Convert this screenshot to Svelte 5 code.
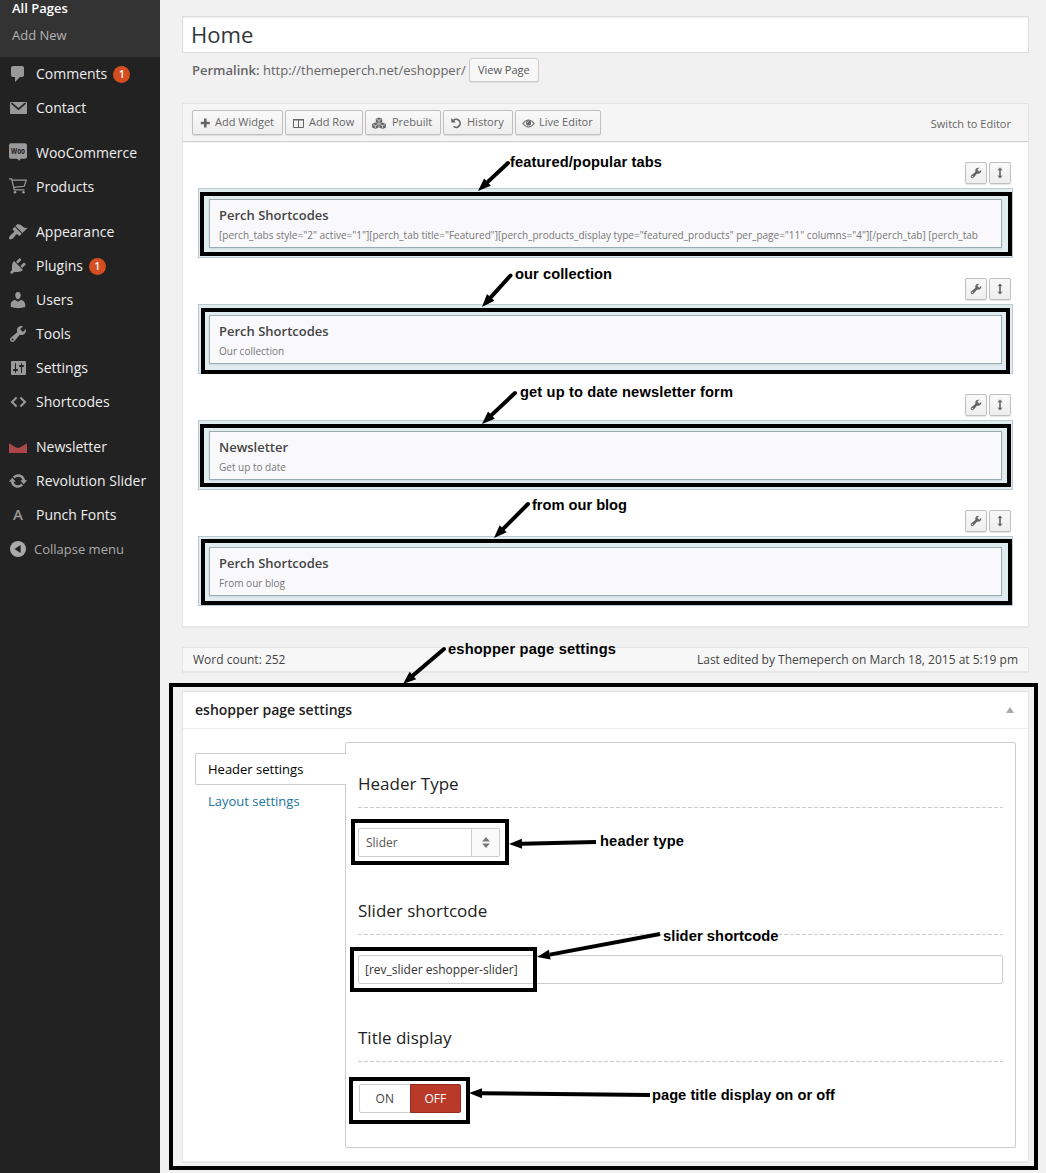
<script>
  const icons = {
    comments: 'M5 2h9c1.1 0 2 .9 2 2v7c0 1.1-.9 2-2 2h-2l-5 5v-5H5c-1.1 0-2-.9-2-2V4c0-1.1.9-2 2-2z',
    appearance: 'M14.48 11.06L7.41 3.99l1.5-1.5c.5-.56 2.3-.47 3.51.32 1.21.8 1.43 1.28 2.91 2.1 1.18.64 2.45 1.26 4.45.85zm-.71.71L6.7 4.7 4.93 6.47c-.39.39-.39 1.02 0 1.41l1.06 1.06c.39.39.39 1.03 0 1.42-.6.6-1.43 1.11-2.21 1.69-.35.26-.7.53-1.01.84C1.43 14.23.4 16.08 1.4 17.07c.99 1 2.84-.03 4.18-1.36.31-.31.58-.66.85-1.02.57-.78 1.08-1.61 1.69-2.21.39-.39 1.02-.39 1.41 0l1.06 1.06c.39.39 1.02.39 1.41 0z',
    plugins: 'M13.11 4.36L9.87 7.6 8 5.73l3.24-3.24c.35-.34 1.05-.2 1.56.32.52.51.66 1.21.31 1.55zm-8 1.77l.91-1.12 9.01 9.01-1.19.84c-.71.71-2.63 1.16-3.82 1.16H6.14L4.9 17.26c-.59.59-1.54.59-2.12 0-.59-.58-.59-1.53 0-2.12l1.24-1.24v-3.88c0-1.13.4-3.19 1.09-3.89zm7.26 3.97l3.24-3.24c.34-.35 1.04-.21 1.55.31.52.51.66 1.21.31 1.55l-3.24 3.25z',
    users: 'M10 9.25c-2.27 0-2.73-3.44-2.73-3.44C7 4.02 7.82 2 9.97 2c2.16 0 2.98 2.02 2.71 3.81 0 0-.41 3.44-2.68 3.44zm0 2.57L12.72 10c2.39 0 4.52 2.33 4.52 4.53v2.49s-3.65 1.13-7.24 1.13c-3.65 0-7.24-1.13-7.24-1.13v-2.49c0-2.25 1.94-4.48 4.47-4.48z',
    tools: 'M16.68 9.77c-1.34 1.34-3.3 1.67-4.95.99l-5.41 6.52c-.99.99-2.59.99-3.58 0s-.99-2.59 0-3.57l6.52-5.42c-.68-1.65-.35-3.61.99-4.95 1.28-1.28 3.12-1.62 4.72-1.06l-2.89 2.89 2.82 2.82 2.86-2.87c.53 1.58.18 3.39-1.08 4.65zM3.81 16.21c.4.39 1.04.39 1.43 0 .4-.4.4-1.04 0-1.43-.39-.4-1.03-.4-1.43 0-.39.39-.39 1.03 0 1.43z',
    settings: 'M18 16V4c0-.55-.45-1-1-1H4c-.55 0-1 .45-1 1v12c0 .55.45 1 1 1h13c.55 0 1-.45 1-1zM8 11h1c.55 0 1 .45 1 1s-.45 1-1 1H8v1.5c0 .28-.22.5-.5.5s-.5-.22-.5-.5V13H6c-.55 0-1-.45-1-1s.45-1 1-1h1V5.5c0-.28.22-.5.5-.5s.5.22.5.5V11zm5-2h-1c-.55 0-1-.45-1-1s.45-1 1-1h1V5.5c0-.28.22-.5.5-.5s.5.22.5.5V7h1c.55 0 1 .45 1 1s-.45 1-1 1h-1v5.5c0 .28-.22.5-.5.5s-.5-.22-.5-.5V9z',
    update: 'M10.2 3.28c3.53 0 6.43 2.61 6.92 6h2.08l-3.5 4-3.5-4h2.32c-.45-1.97-2.21-3.45-4.32-3.45-1.45 0-2.73.71-3.54 1.78L4.95 5.66C6.23 4.2 8.11 3.28 10.2 3.28zm-.4 13.44c-3.52 0-6.43-2.61-6.92-6H.8l3.5-4c1.17 1.33 2.33 2.67 3.5 4H5.48c.45 1.97 2.21 3.45 4.32 3.45 1.45 0 2.73-.71 3.54-1.78l1.71 1.95c-1.28 1.46-3.15 2.38-5.25 2.38z'
  };

  const menu = [
    [{ label: 'Comments', icon: 'comments', badge: 1 }, { label: 'Contact', icon: 'mail' }],
    [{ label: 'WooCommerce', icon: 'woo' }, { label: 'Products', icon: 'cart' }],
    [
      { label: 'Appearance', icon: 'appearance' },
      { label: 'Plugins', icon: 'plugins', badge: 1 },
      { label: 'Users', icon: 'users' },
      { label: 'Tools', icon: 'tools' },
      { label: 'Settings', icon: 'settings' },
      { label: 'Shortcodes', icon: 'code' }
    ],
    [
      { label: 'Newsletter', icon: 'news' },
      { label: 'Revolution Slider', icon: 'update' },
      { label: 'Punch Fonts', icon: 'letter' }
    ]
  ];

  const tools = [
    { id: 'add', label: 'Add Widget' },
    { id: 'row', label: 'Add Row' },
    { id: 'prebuilt', label: 'Prebuilt' },
    { id: 'history', label: 'History' },
    { id: 'live', label: 'Live Editor' }
  ];

  const rows = [
    { title: 'Perch Shortcodes', text: '[perch_tabs style="2" active="1"][perch_tab title="Featured"][perch_products_display type="featured_products" per_page="11" columns="4"][/perch_tab] [perch_tab' },
    { title: 'Perch Shortcodes', text: 'Our collection' },
    { title: 'Newsletter', text: 'Get up to date' },
    { title: 'Perch Shortcodes', text: 'From our blog' }
  ];

  // Callout frames: outer edges, drawn with a 4px stroke inside them
  const frames = [
    [200, 192, 1012, 256], [201, 308, 1010, 374], [200, 424, 1011, 487], [201, 539, 1012, 605],
    [169, 683, 1038, 1170], [351, 819, 509, 865], [350, 947, 537, 992], [349, 1077, 470, 1124]
  ];

  // Callout labels with the arrow that runs from the label to its frame
  const notes = [
    { text: 'featured/popular tabs', x: 510, y: 167, w: 152, from: [508, 163], tip: [478, 191] },
    { text: 'our collection', x: 515, y: 279, w: 97, from: [510.5, 275.5], tip: [482, 307] },
    { text: 'get up to date newsletter form', x: 520, y: 397, w: 213, from: [515, 393], tip: [482, 424] },
    { text: 'from our blog', x: 532, y: 510, w: 95, from: [528, 504], tip: [494, 538] },
    { text: 'eshopper page settings', x: 448, y: 654, w: 168, from: [444, 649], tip: [403, 684] },
    { text: 'header type', x: 600, y: 846, w: 84, from: [596, 842], tip: [509, 844] },
    { text: 'slider shortcode', x: 663, y: 941, w: 115.5, from: [660, 934], tip: [537, 957] },
    { text: 'page title display on or off', x: 652, y: 1100, w: 183, from: [650, 1095], tip: [469, 1093] }
  ].map((n) => {
    const dx = n.tip[0] - n.from[0];
    const dy = n.tip[1] - n.from[1];
    const len = Math.hypot(dx, dy);
    const ux = dx / len;
    const uy = dy / len;
    const bx = n.tip[0] - ux * 13;
    const by = n.tip[1] - uy * 13;
    return { ...n, bx, by, head: `${n.tip} ${bx - uy * 5},${by + ux * 5} ${bx + uy * 5},${by - ux * 5}` };
  });
</script>

{#snippet wrench()}
  <svg width="12" height="12" viewBox="1 1 18 18"><path d={icons.tools} /></svg>
{/snippet}

<div class="page">
  <nav class="sidebar">
    <div class="submenu">
      <span class="current">All Pages</span>
      <span>Add New</span>
    </div>
    {#each menu as group}
      <ul>
        {#each group as item}
          <li>
            <svg class="icon" width="20" height="20" viewBox="0 0 20 20">
              {#if item.icon === 'mail'}
                <rect x="2" y="4" width="17" height="12" rx="1" />
                <path d="M3.500 5.200 10.500 11.200 17.500 5.200" fill="none" stroke="#222" stroke-width="1.700" />
              {:else if item.icon === 'woo'}
                <path d="M3 .2h14a2 2 0 0 1 2 2v11.500a2 2 0 0 1-2 2h-4.500l-1 2-2.500-2H3a2 2 0 0 1-2-2V2.200a2 2 0 0 1 2-2z" />
                <text x="3" y="10.500" class="woo" textLength="14" lengthAdjust="spacingAndGlyphs">Woo</text>
              {:else if item.icon === 'cart'}
                <path d="M1 1.800h2.600L6.300 12.800h10.200M4 3.200h14.300L16.200 9.300 5.700 10.300" fill="none" stroke="#999" stroke-width="1.200" />
                <circle cx="7" cy="15.300" r="1.300" /><circle cx="15.500" cy="15.300" r="1.300" />
              {:else if item.icon === 'code'}
                <path d="M8.600 5.500 4 10l4.600 4.500M12.400 5.500 17 10l-4.600 4.500" fill="none" stroke="#999" stroke-width="2" />
              {:else if item.icon === 'news'}
                <path d="M1 6.300 10 11.500 19 6.300V16H1z" fill="#a8484a" />
                <path d="M1 16 10 10.500 19 16z" fill="#ae4448" />
              {:else if item.icon === 'letter'}
                <text x="10" y="15" class="letter">A</text>
              {:else}
                <path d={icons[item.icon]} fill-rule="evenodd" />
              {/if}
            </svg>
            <span>{item.label}</span>
            {#if item.badge}<b class="badge">{item.badge}</b>{/if}
          </li>
        {/each}
      </ul>
    {/each}
    <div class="collapse">
      <svg width="20" height="20" viewBox="0 0 20 20">
        <circle cx="10" cy="10" r="8" fill="#aaa" /><path d="M12.600 5.900v8.200L6.500 10z" fill="#222" />
      </svg>
      <span>Collapse menu</span>
    </div>
  </nav>

  <main>
    <div class="title">Home</div>
    <div class="permalink">
      <span><strong>Permalink:</strong> http://themeperch.net/eshopper/</span>
      <button class="view">View Page</button>
    </div>

    <section class="builder">
      <header>
        {#each tools as t}
          <button class={['tool', t.id]}>
            <svg width="14" height="12" viewBox="0 0 14 12">
              {#if t.id === 'add'}
                <path d="M5 1.500h2.600v3.200h3.200v2.600H7.600v3.200H5V7.300H1.800V4.700H5z" />
              {:else if t.id === 'row'}
                <path d="M1.500 2.500h10v8h-10zM6.500 2.500v8" fill="none" stroke="#666" />
                <path d="M1 2h11v1.500H1z" />
              {:else if t.id === 'prebuilt'}
                <path d="M7 .5l3.200 1.300v3.400L7 6.600 3.800 5.200V1.800zM3.400 5.600l3.300 1.400v3.400l-3.300 1.500L.1 10.400V7zM10.600 5.600l3.300 1.400v3.400l-3.300 1.500-3.300-1.500V7z" />
                <path d="M4.600 2.400 7 3.400l2.400-1M7 3.400v2.600M1 7.600l2.400 1 2.400-1M3.400 8.600v2.900M8.200 7.600l2.400 1 2.400-1M10.600 8.600v2.900" fill="none" stroke="#f3f3f3" stroke-width=".7" />
              {:else if t.id === 'history'}
                <path d="M3.200 3.600A4 4 0 1 1 3.600 9.400" fill="none" stroke="#666" stroke-width="1.700" />
                <path d="M1.300 1v4.600h4.600z" />
              {:else}
                <path d="M.8 6.500Q6.500-.5 12.200 6.500 6.500 13.500.8 6.500z" fill="none" stroke="#666" stroke-width="1.100" />
                <circle cx="6.500" cy="6" r="2.600" />
                <path d="M5.200 6a1.400 1.400 0 0 1 1.400-1.400" fill="none" stroke="#f5f5f5" stroke-width=".7" />
              {/if}
            </svg>
            <span>{t.label}</span>
          </button>
        {/each}
        <span class="switch">Switch to Editor</span>
      </header>
      <div class="rows">
        {#each rows as row}
          <article>
            <div class="actions">
              <button>{@render wrench()}</button>
              <button>
                <svg width="8" height="12" viewBox="0 0 8 12"><path d="M4 .5 6.500 3.300H4.800v5.400h1.700L4 11.500 1.500 8.700h1.700V3.300H1.500z" /></svg>
              </button>
            </div>
            <div class="cell">
              <div class="widget">
                <h4>{row.title}</h4>
                <p>{row.text}</p>
              </div>
            </div>
          </article>
        {/each}
      </div>
    </section>

    <div class="status">
      <span>Word count: 252</span>
      <span>Last edited by Themeperch on March 18, 2015 at 5:19 pm</span>
    </div>

    <section class="metabox">
      <h3><span>eshopper page settings</span><i></i></h3>
      <div class="panel">
        <div class="tabs">
          <span class="tab active">Header settings</span>
          <span class="tab">Layout settings</span>
        </div>
        <div class="fields">
          <div class="field">
            <h2>Header Type</h2>
            <div class="select">
              <span>Slider</span>
              <em><svg width="8" height="11" viewBox="0 0 8 11"><path d="M4 0l3.800 4.500H.2zM4 11l3.800-4.500H.2z" /></svg></em>
            </div>
          </div>
          <div class="field">
            <h2>Slider shortcode</h2>
            <div class="input">[rev_slider eshopper-slider]</div>
          </div>
          <div class="field">
            <h2>Title display</h2>
            <div class="toggle"><span>ON</span><span class="off">OFF</span></div>
          </div>
        </div>
      </div>
    </section>
  </main>

  <svg class="overlay" width="1046" height="1173" viewBox="0 0 1046 1173">
    {#each frames as [x1, y1, x2, y2]}
      <rect x={x1 + 2} y={y1 + 2} width={x2 - x1 - 4} height={y2 - y1 - 4} fill="none" stroke="#000" stroke-width="4" />
    {/each}
    {#each notes as n}
      <line x1={n.from[0]} y1={n.from[1]} x2={n.bx} y2={n.by} stroke="#000" stroke-width="4" stroke-linecap={n.from[1] < 700 ? 'round' : 'butt'} />
      <polygon points={n.head} />
      <text x={n.x} y={n.y} textLength={n.w}>{n.text}</text>
    {/each}
  </svg>
</div>

<style>
  :global(body) { background: #f1f1f1; }
  .page {
    position: relative;
    display: flex;
    width: 1046px;
    height: 1173px;
    overflow: hidden;
    box-sizing: border-box;
    font-family: "Open Sans", "Noto Sans", sans-serif;
    font-size: 13px;
    color: #444;
  }
  .page :global(*) { box-sizing: border-box; }
  svg { display: block; flex: none; }
  button { font: inherit; color: #555; margin: 0; padding: 0; }

  .sidebar { width: 160px; flex: none; background: #222; color: #eee; font-size: 14px; }
  .submenu {
    height: 57px; background: #333; color: #b4b4b4; font-size: 13px;
    display: flex; flex-direction: column; padding-left: 12px; line-height: 27px;
  }
  .submenu span { height: 27px; }
  .submenu .current { color: #fff; font-weight: 600; margin-top: -5px; }
  ul { list-style: none; margin: 0 0 11px; padding: 0; }
  li { height: 34px; display: flex; align-items: center; padding-left: 8px; line-height: 34px; }
  li span { margin-left: 8px; white-space: nowrap; }
  .icon { fill: #999; }
  .woo { font: 700 8px "Open Sans", sans-serif; fill: #222; }
  .letter { font: 600 15px "Open Sans", sans-serif; fill: #999; text-anchor: middle; }
  .badge {
    width: 17px; height: 17px; border-radius: 50%; background: #d54e21; color: #fff;
    font-size: 10px; font-weight: 600; line-height: 17px; text-align: center; margin-left: 6px;
  }
  .collapse {
    display: flex; align-items: center; gap: 6px; height: 34px; margin-top: -11px;
    padding-left: 8px; font-size: 13px; color: #aaa;
  }

  main { flex: none; width: 847px; margin-left: 22px; padding-top: 16px; }
  .title {
    height: 37px; background: #fff; border: 1px solid #ddd; box-shadow: inset 0 1px 2px rgba(0, 0, 0, .07);
    padding-left: 8px; font-size: 22.100px; line-height: 35px; color: #32373c;
  }
  .permalink { display: flex; gap: 3px; height: 24px; margin-top: 5px; padding-left: 10px; line-height: 25px; color: #666; white-space: nowrap; }
  .permalink strong { font-weight: 600; }
  .view {
    width: 70px; height: 24px; background: #f7f7f7; border: 1px solid #ccc; border-radius: 3px;
    box-shadow: inset 0 1px 0 #fff, 0 1px 0 rgba(0, 0, 0, .08); font-size: 11px; line-height: 22px;
  }

  .builder { height: 524px; margin-top: 21px; background: #fff; border: 1px solid #e5e5e5; box-shadow: 0 1px 1px rgba(0, 0, 0, .04); }
  .builder header {
    display: flex; gap: 2px; height: 38px; padding: 6px 17px 0 9px; background: #f5f5f5;
    border-bottom: 1px solid #d0d0d0; box-shadow: 0 1px 1px rgba(0, 0, 0, .04);
  }
  .tool, .actions button {
    display: flex; align-items: center; background: linear-gradient(#f9f9f9, #eee); border: 1px solid #bfbfbf;
    border-radius: 2px; box-shadow: 0 1px 1px rgba(0, 0, 0, .1); fill: #666; color: #666;
  }
  .tool { height: 25px; padding-left: 6px; font-size: 11px; white-space: nowrap; }
  .tool svg { margin-top: 1px; }
  .tool span { margin-left: 2px; margin-top: -2px; }
  .add { width: 91px; } .row { width: 78px; } .prebuilt { width: 76px; } .history { width: 70px; } .live { width: 86px; }
  .prebuilt span { margin-left: 6px; }
  .row span, .history span, .live span { margin-left: 3px; }
  .switch { margin-left: auto; font-size: 11px; line-height: 28px; color: #666; }
  .rows { padding: 20px 15px 0; }
  article { height: 116px; }
  .actions { display: flex; justify-content: flex-end; gap: 2px; padding-right: 2px; height: 26px; }
  .actions button { width: 22px; height: 22px; justify-content: center; }
  .cell { height: 70px; border: 1px solid #b8cbd3; background: #e1ecf1; padding: 10px; }
  .widget { height: 49px; border: 1px solid #9aadb5; background: #f9f9fb; padding: 6px 9px 0; box-shadow: 0 1px 2px rgba(0, 0, 0, .08); }
  h4 { margin: 0; font-size: 13px; line-height: 18px; font-weight: 600; color: #444; }
  p { margin: 3px 0 0; font-size: 10px; line-height: 16px; color: #777; white-space: nowrap; }

  .status {
    display: flex; justify-content: space-between; height: 25px; margin-top: 20px; padding: 0 10px;
    background: #f7f7f7; border: 1px solid #e5e5e5; font-size: 12px; line-height: 23px; box-shadow: 0 1px 1px rgba(0, 0, 0, .04);
  }
  .metabox { height: 471px; margin-top: 19px; background: #fff; border: 1px solid #e5e5e5; box-shadow: 0 1px 1px rgba(0, 0, 0, .04); }
  h3 {
    display: flex; justify-content: space-between; align-items: center; height: 37px; margin: 0; padding: 0 14px 0 12px;
    border-bottom: 1px solid #eee; font-size: 14px; font-weight: 600; color: #222;
  }
  h3 span { margin-top: -2px; }
  h3 i { border: 4px solid transparent; border-top: 0; border-bottom: 6px solid #aaa; }
  .panel { display: flex; padding: 13px 12px; }
  .tabs { width: 151px; padding-top: 11px; position: relative; z-index: 1; }
  .tab { display: block; height: 32px; line-height: 33px; padding-left: 13px; color: #21759b; }
  .tab.active { background: #fff; border: 1px solid #ccc; border-right: 0; border-radius: 2px 0 0 2px; padding-left: 12px; line-height: 31px; color: #000; }
  .fields { flex: 1; height: 406px; margin-left: -1px; border: 1px solid #ccc; border-radius: 2px; padding: 28px 12px 0; }
  .field { height: 127px; }
  h2 {
    margin: 0 0 20px; height: 37px; font-size: 17px; line-height: 26px; font-weight: 400; color: #222;
    background: repeating-linear-gradient(90deg, #ccc 0 4px, transparent 4px 6px) 0 100% / 100% 1px no-repeat;
  }
  .select { display: flex; width: 142px; height: 29px; border: 1px solid #ccc; border-radius: 2px; font-size: 12px; line-height: 28px; padding-left: 7px; color: #555; }
  .select span { flex: 1; }
  .select em { width: 28px; border-left: 1px solid #ccc; background: #fafafa; display: flex; align-items: center; justify-content: center; fill: #777; }
  .input { height: 29px; border: 1px solid #ccc; border-radius: 2px; padding-left: 6px; font-size: 12px; line-height: 28px; color: #333; }
  .toggle { display: flex; width: 102px; height: 29px; margin: 22px 0 0 1px; border: 1px solid #ccc; border-radius: 2px; font-size: 12px; line-height: 27px; text-align: center; }
  .toggle span { width: 50px; }
  .toggle .off { width: 52px; height: 29px; margin: -1px -1px -1px 0; border: 1px solid #962d20; border-radius: 0 2px 2px 0; background: #b93a29; color: #fff; }

  .overlay { position: absolute; left: 0; top: 0; pointer-events: none; }
  .overlay text { font: 700 14.670px "Liberation Sans", Arial, sans-serif; fill: #000; }
</style>
